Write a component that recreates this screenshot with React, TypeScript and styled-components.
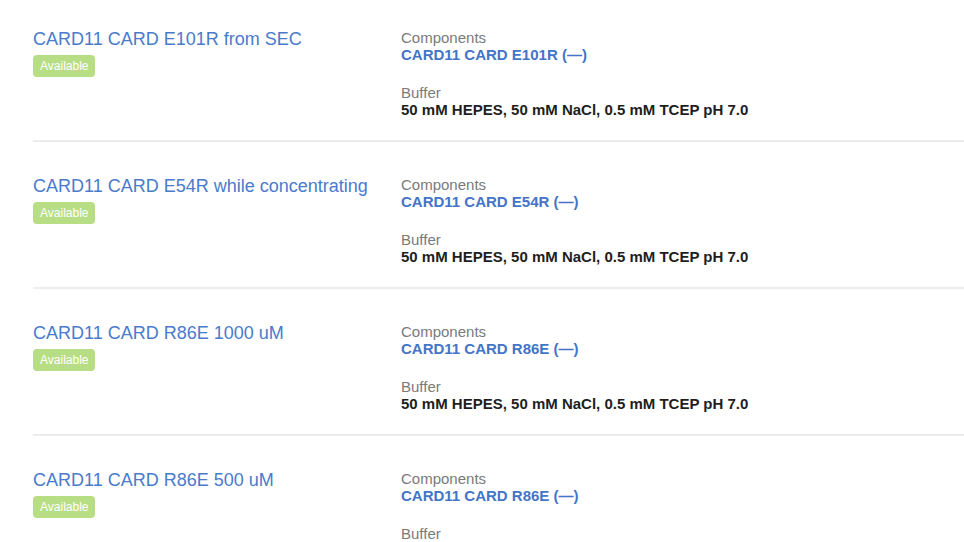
import styled, { createGlobalStyle } from "styled-components"

const GlobalStyle = createGlobalStyle`
  body {
    margin: 0;
    background: #fff;
    font-family: "Liberation Sans", Arial, Helvetica, sans-serif;
  }
`

const List = styled.div`
  display: flex;
  flex-direction: column;
  padding-left: 33px;
`

const Row = styled.div`
  display: grid;
  grid-template-columns: 368px 1fr;
  padding: 34px 0 22px;
  border-bottom: 2px solid #ededed;

  &:first-child {
    padding-top: 29px;
  }
`

const Summary = styled.div`
  display: flex;
  flex-direction: column;
  align-items: flex-start;
`

const Title = styled.a`
  font-size: 18px;
  line-height: 20px;
  color: #4a7bcb;
  text-decoration: none;
  cursor: pointer;
`

const Badge = styled.span`
  margin-top: 6px;
  height: 22px;
  padding: 0 7px;
  display: inline-flex;
  align-items: center;
  border-radius: 4px;
  background: #b7de84;
  color: #fff;
  font-size: 12px;
`

const Details = styled.div`
  display: flex;
  flex-direction: column;
  gap: 21px;
`

const Field = styled.div`
  display: flex;
  flex-direction: column;
`

const Label = styled.span`
  font-size: 15px;
  line-height: 17px;
  color: #7a7a7a;
`

const Value = styled.span<{ $link?: boolean }>`
  font-size: 15px;
  line-height: 17px;
  font-weight: 700;
  color: ${(p) => (p.$link ? "#4474c8" : "#1e1e1e")};
`

interface Sample {
  name: string
  component: string
  buffer: string
}

const samples: Sample[] = [
  {
    name: "CARD11 CARD E101R from SEC",
    component: "CARD11 CARD E101R (\u2014)",
    buffer: "50 mM HEPES, 50 mM NaCl, 0.5 mM TCEP pH 7.0",
  },
  {
    name: "CARD11 CARD E54R while concentrating",
    component: "CARD11 CARD E54R (\u2014)",
    buffer: "50 mM HEPES, 50 mM NaCl, 0.5 mM TCEP pH 7.0",
  },
  {
    name: "CARD11 CARD R86E 1000 uM",
    component: "CARD11 CARD R86E (\u2014)",
    buffer: "50 mM HEPES, 50 mM NaCl, 0.5 mM TCEP pH 7.0",
  },
  {
    name: "CARD11 CARD R86E 500 uM",
    component: "CARD11 CARD R86E (\u2014)",
    buffer: "50 mM HEPES, 50 mM NaCl, 0.5 mM TCEP pH 7.0",
  },
]

export default function App() {
  return (
    <>
      <GlobalStyle />
      <List>
        {samples.map((s) => (
          <Row key={s.name}>
            <Summary>
              <Title>{s.name}</Title>
              <Badge>Available</Badge>
            </Summary>
            <Details>
              <Field>
                <Label>Components</Label>
                <Value $link>{s.component}</Value>
              </Field>
              <Field>
                <Label>Buffer</Label>
                <Value>{s.buffer}</Value>
              </Field>
            </Details>
          </Row>
        ))}
      </List>
    </>
  )
}
